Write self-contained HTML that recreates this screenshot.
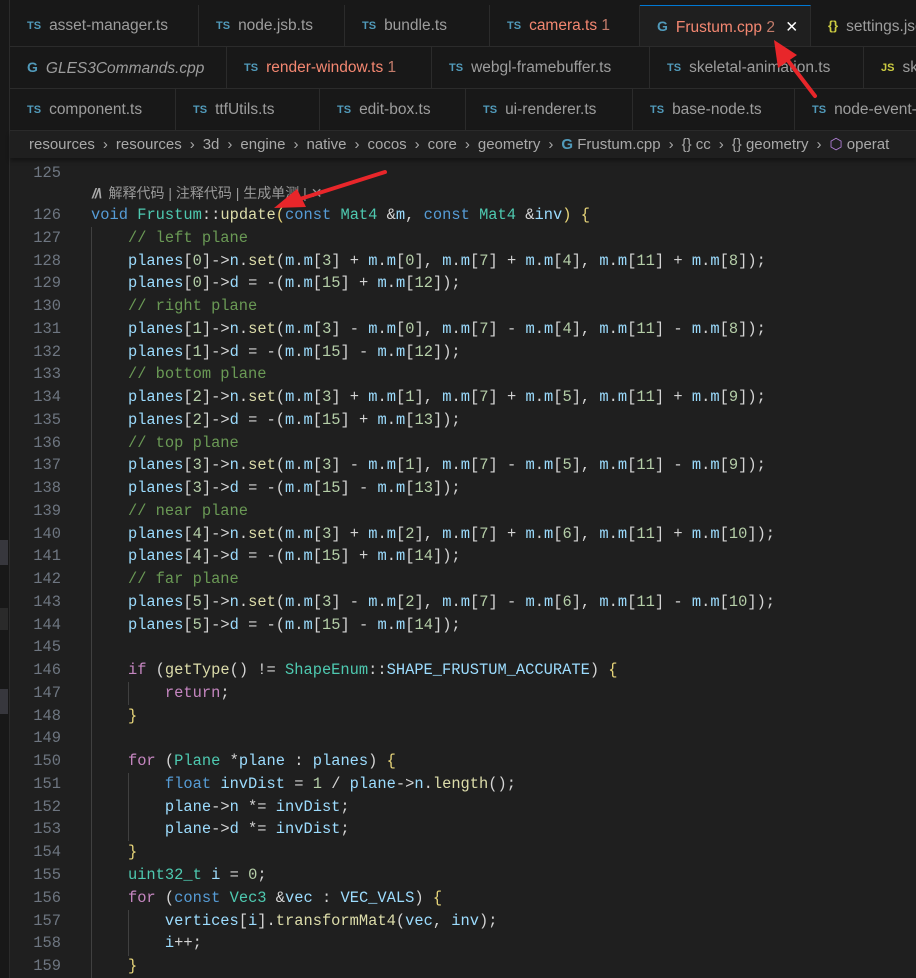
<!DOCTYPE html>
<html><head><meta charset="utf-8"><style>
html,body{margin:0;padding:0;background:#1f1f1f;width:916px;height:978px;overflow:hidden;position:relative;font-family:"Liberation Sans","Noto Sans CJK SC",sans-serif}
.side{position:absolute;left:0;top:0;width:9px;height:978px;background:#181818;border-right:1px solid #2b2b2b}
.top{position:absolute;left:0;top:0;width:916px;height:5px;background:#181818}
.row{position:absolute;left:10px;height:41px;width:906px;background:#181818;border-bottom:1px solid #2b2b2b}
.tab{position:absolute;top:0;height:41px;line-height:41px;border-right:1px solid #2b2b2b;color:#9d9d9d;font-size:15.5px;white-space:nowrap;overflow:hidden;box-sizing:border-box;padding-left:17px}
.tab .i{display:inline-block;font-weight:bold;font-size:11px;color:#519aba;margin:0 8px 0 0;vertical-align:1px}
.tab.act{background:#1f1f1f;border-top:1px solid #0078d4}
.err{color:#f48771}
.bc{position:absolute;left:10px;top:131px;width:906px;height:27px;line-height:27px;color:#a9a9a9;font-size:15px;white-space:nowrap;padding-left:19px;box-sizing:border-box;box-shadow:0 3px 4px rgba(0,0,0,.35);background:#1f1f1f;z-index:2;overflow:hidden}
.bc span.s{margin:0 8px;color:#a9a9a9}
.code{position:absolute;left:0;top:0;width:916px;font-family:"Liberation Mono",monospace;font-size:15.4px;color:#d4d4d4}
.l{position:absolute;left:91px;height:23px;line-height:23px;white-space:pre}
.ln{position:absolute;left:28px;width:33px;text-align:right;height:23px;line-height:23px;color:#6e7681}
.g{position:absolute;width:1px;background:#404040}
v{color:#9cdcfe}f{color:#dcdcaa}k{color:#569cd6}c{color:#c586c0}t{color:#4ec9b0}n{color:#b5cea8}m{color:#6a9955}y{color:#e8d67a}
</style></head><body>
<div class="top"></div>
<div class="side"></div>
<div style="position:absolute;left:0;top:540px;width:8px;height:25px;background:#37373d"></div>
<div style="position:absolute;left:0;top:689px;width:8px;height:25px;background:#37373d"></div>
<div style="position:absolute;left:0;top:608px;width:8px;height:22px;background:#2a2a2a"></div>

<div class="row" style="top:5px">
 <div class="tab" style="left:0;width:189px"><span class="i">TS</span>asset-manager.ts</div>
 <div class="tab" style="left:189px;width:146px"><span class="i">TS</span>node.jsb.ts</div>
 <div class="tab" style="left:335px;width:145px"><span class="i">TS</span>bundle.ts</div>
 <div class="tab err" style="left:480px;width:150px"><span class="i">TS</span>camera.ts <span style="color:#c27b6a">1</span></div>
 <div class="tab act err" style="left:630px;width:171px"><span class="i" style="font-size:14px">G</span>Frustum.cpp <span style="color:#c27b6a">2</span> <span style="color:#fff;margin-left:6px">✕</span></div>
 <div class="tab" style="left:801px;width:110px"><span class="i" style="color:#cbcb41;font-size:13px">{}</span>settings.json</div>
</div>
<div class="row" style="top:47px">
 <div class="tab" style="left:0;width:217px;font-style:italic"><span class="i" style="font-size:14px;font-style:normal">G</span>GLES3Commands.cpp</div>
 <div class="tab err" style="left:217px;width:205px"><span class="i">TS</span>render-window.ts <span style="color:#c27b6a">1</span></div>
 <div class="tab" style="left:422px;width:218px"><span class="i">TS</span>webgl-framebuffer.ts</div>
 <div class="tab" style="left:640px;width:214px"><span class="i">TS</span>skeletal-animation.ts</div>
 <div class="tab" style="left:854px;width:60px"><span class="i" style="color:#cbcb41">JS</span>sk</div>
</div>
<div class="row" style="top:89px">
 <div class="tab" style="left:0;width:166px"><span class="i">TS</span>component.ts</div>
 <div class="tab" style="left:166px;width:144px"><span class="i">TS</span>ttfUtils.ts</div>
 <div class="tab" style="left:310px;width:146px"><span class="i">TS</span>edit-box.ts</div>
 <div class="tab" style="left:456px;width:167px"><span class="i">TS</span>ui-renderer.ts</div>
 <div class="tab" style="left:623px;width:162px"><span class="i">TS</span>base-node.ts</div>
 <div class="tab" style="left:785px;width:130px"><span class="i">TS</span>node-event-</div>
</div>
<div class="bc">resources<span class="s">›</span>resources<span class="s">›</span>3d<span class="s">›</span>engine<span class="s">›</span>native<span class="s">›</span>cocos<span class="s">›</span>core<span class="s">›</span>geometry<span class="s">›</span><span style="color:#519aba;font-weight:bold">G</span> Frustum.cpp<span class="s">›</span>{} cc<span class="s">›</span>{} geometry<span class="s">›</span><span style="color:#b180d7">⬡</span> operat</div>

<div class="code">
<div class="g" style="left:91px;top:227px;height:751px"></div>
<div class="g" style="left:128px;top:682px;height:23px"></div>
<div class="g" style="left:128px;top:773px;height:68px"></div>
<div class="g" style="left:128px;top:910px;height:46px"></div>

<div class="ln" style="top:162px">125</div>
<div style="position:absolute;left:92px;top:183px;height:20px;line-height:20px;white-space:nowrap;font-family:'Liberation Sans','Noto Sans CJK SC',sans-serif;font-size:14px;color:#999"><b style="font-style:italic;letter-spacing:-1px;color:#aaa">//\</b>&nbsp; 解释代码 | 注释代码 | 生成单测 | ✕</div>
<div class="ln" style="top:204px">126</div><div class="l" style="top:204px"><k>void</k> <t>Frustum</t>::<f>update</f><y>(</y><k>const</k> <t>Mat4</t> &amp;<v>m</v>, <k>const</k> <t>Mat4</t> &amp;<v>inv</v><y>)</y> <y>{</y></div>
<div class="ln" style="top:227px">127</div><div class="l" style="top:227px">    <m>// left plane</m></div>
<div class="ln" style="top:250px">128</div><div class="l" style="top:250px">    <v>planes</v>[<n>0</n>]-&gt;<v>n</v>.<f>set</f>(<v>m</v>.<v>m</v>[<n>3</n>] + <v>m</v>.<v>m</v>[<n>0</n>], <v>m</v>.<v>m</v>[<n>7</n>] + <v>m</v>.<v>m</v>[<n>4</n>], <v>m</v>.<v>m</v>[<n>11</n>] + <v>m</v>.<v>m</v>[<n>8</n>]);</div>
<div class="ln" style="top:272px">129</div><div class="l" style="top:272px">    <v>planes</v>[<n>0</n>]-&gt;<v>d</v> = -(<v>m</v>.<v>m</v>[<n>15</n>] + <v>m</v>.<v>m</v>[<n>12</n>]);</div>
<div class="ln" style="top:295px">130</div><div class="l" style="top:295px">    <m>// right plane</m></div>
<div class="ln" style="top:318px">131</div><div class="l" style="top:318px">    <v>planes</v>[<n>1</n>]-&gt;<v>n</v>.<f>set</f>(<v>m</v>.<v>m</v>[<n>3</n>] - <v>m</v>.<v>m</v>[<n>0</n>], <v>m</v>.<v>m</v>[<n>7</n>] - <v>m</v>.<v>m</v>[<n>4</n>], <v>m</v>.<v>m</v>[<n>11</n>] - <v>m</v>.<v>m</v>[<n>8</n>]);</div>
<div class="ln" style="top:341px">132</div><div class="l" style="top:341px">    <v>planes</v>[<n>1</n>]-&gt;<v>d</v> = -(<v>m</v>.<v>m</v>[<n>15</n>] - <v>m</v>.<v>m</v>[<n>12</n>]);</div>
<div class="ln" style="top:363px">133</div><div class="l" style="top:363px">    <m>// bottom plane</m></div>
<div class="ln" style="top:386px">134</div><div class="l" style="top:386px">    <v>planes</v>[<n>2</n>]-&gt;<v>n</v>.<f>set</f>(<v>m</v>.<v>m</v>[<n>3</n>] + <v>m</v>.<v>m</v>[<n>1</n>], <v>m</v>.<v>m</v>[<n>7</n>] + <v>m</v>.<v>m</v>[<n>5</n>], <v>m</v>.<v>m</v>[<n>11</n>] + <v>m</v>.<v>m</v>[<n>9</n>]);</div>
<div class="ln" style="top:409px">135</div><div class="l" style="top:409px">    <v>planes</v>[<n>2</n>]-&gt;<v>d</v> = -(<v>m</v>.<v>m</v>[<n>15</n>] + <v>m</v>.<v>m</v>[<n>13</n>]);</div>
<div class="ln" style="top:432px">136</div><div class="l" style="top:432px">    <m>// top plane</m></div>
<div class="ln" style="top:454px">137</div><div class="l" style="top:454px">    <v>planes</v>[<n>3</n>]-&gt;<v>n</v>.<f>set</f>(<v>m</v>.<v>m</v>[<n>3</n>] - <v>m</v>.<v>m</v>[<n>1</n>], <v>m</v>.<v>m</v>[<n>7</n>] - <v>m</v>.<v>m</v>[<n>5</n>], <v>m</v>.<v>m</v>[<n>11</n>] - <v>m</v>.<v>m</v>[<n>9</n>]);</div>
<div class="ln" style="top:477px">138</div><div class="l" style="top:477px">    <v>planes</v>[<n>3</n>]-&gt;<v>d</v> = -(<v>m</v>.<v>m</v>[<n>15</n>] - <v>m</v>.<v>m</v>[<n>13</n>]);</div>
<div class="ln" style="top:500px">139</div><div class="l" style="top:500px">    <m>// near plane</m></div>
<div class="ln" style="top:523px">140</div><div class="l" style="top:523px">    <v>planes</v>[<n>4</n>]-&gt;<v>n</v>.<f>set</f>(<v>m</v>.<v>m</v>[<n>3</n>] + <v>m</v>.<v>m</v>[<n>2</n>], <v>m</v>.<v>m</v>[<n>7</n>] + <v>m</v>.<v>m</v>[<n>6</n>], <v>m</v>.<v>m</v>[<n>11</n>] + <v>m</v>.<v>m</v>[<n>10</n>]);</div>
<div class="ln" style="top:545px">141</div><div class="l" style="top:545px">    <v>planes</v>[<n>4</n>]-&gt;<v>d</v> = -(<v>m</v>.<v>m</v>[<n>15</n>] + <v>m</v>.<v>m</v>[<n>14</n>]);</div>
<div class="ln" style="top:568px">142</div><div class="l" style="top:568px">    <m>// far plane</m></div>
<div class="ln" style="top:591px">143</div><div class="l" style="top:591px">    <v>planes</v>[<n>5</n>]-&gt;<v>n</v>.<f>set</f>(<v>m</v>.<v>m</v>[<n>3</n>] - <v>m</v>.<v>m</v>[<n>2</n>], <v>m</v>.<v>m</v>[<n>7</n>] - <v>m</v>.<v>m</v>[<n>6</n>], <v>m</v>.<v>m</v>[<n>11</n>] - <v>m</v>.<v>m</v>[<n>10</n>]);</div>
<div class="ln" style="top:614px">144</div><div class="l" style="top:614px">    <v>planes</v>[<n>5</n>]-&gt;<v>d</v> = -(<v>m</v>.<v>m</v>[<n>15</n>] - <v>m</v>.<v>m</v>[<n>14</n>]);</div>
<div class="ln" style="top:636px">145</div>
<div class="ln" style="top:659px">146</div><div class="l" style="top:659px">    <c>if</c> (<f>getType</f>() != <t>ShapeEnum</t>::<v>SHAPE_FRUSTUM_ACCURATE</v>) <y>{</y></div>
<div class="ln" style="top:682px">147</div><div class="l" style="top:682px">        <c>return</c>;</div>
<div class="ln" style="top:705px">148</div><div class="l" style="top:705px">    <y>}</y></div>
<div class="ln" style="top:727px">149</div>
<div class="ln" style="top:750px">150</div><div class="l" style="top:750px">    <c>for</c> (<t>Plane</t> *<v>plane</v> : <v>planes</v>) <y>{</y></div>
<div class="ln" style="top:773px">151</div><div class="l" style="top:773px">        <k>float</k> <v>invDist</v> = <n>1</n> / <v>plane</v>-&gt;<v>n</v>.<f>length</f>();</div>
<div class="ln" style="top:796px">152</div><div class="l" style="top:796px">        <v>plane</v>-&gt;<v>n</v> *= <v>invDist</v>;</div>
<div class="ln" style="top:818px">153</div><div class="l" style="top:818px">        <v>plane</v>-&gt;<v>d</v> *= <v>invDist</v>;</div>
<div class="ln" style="top:841px">154</div><div class="l" style="top:841px">    <y>}</y></div>
<div class="ln" style="top:864px">155</div><div class="l" style="top:864px">    <t>uint32_t</t> <v>i</v> = <n>0</n>;</div>
<div class="ln" style="top:887px">156</div><div class="l" style="top:887px">    <c>for</c> (<k>const</k> <t>Vec3</t> &amp;<v>vec</v> : <v>VEC_VALS</v>) <y>{</y></div>
<div class="ln" style="top:910px">157</div><div class="l" style="top:910px">        <v>vertices</v>[<v>i</v>].<f>transformMat4</f>(<v>vec</v>, <v>inv</v>);</div>
<div class="ln" style="top:932px">158</div><div class="l" style="top:932px">        <v>i</v>++;</div>
<div class="ln" style="top:955px">159</div><div class="l" style="top:955px">    <y>}</y></div>
</div>

<svg width="916" height="978" style="position:absolute;left:0;top:0;z-index:5" viewBox="0 0 916 978">
 <path d="M385 172 L300 199" stroke="#e8262a" stroke-width="4" stroke-linecap="round"/>
 <path d="M274 208 L297 189 L306 207 Z" fill="#e8262a"/>
 <path d="M815 96 L786 58" stroke="#e8262a" stroke-width="4" stroke-linecap="round"/>
 <path d="M774 40 L778 68 L797 55 Z" fill="#e8262a"/>
</svg>
</body></html>
